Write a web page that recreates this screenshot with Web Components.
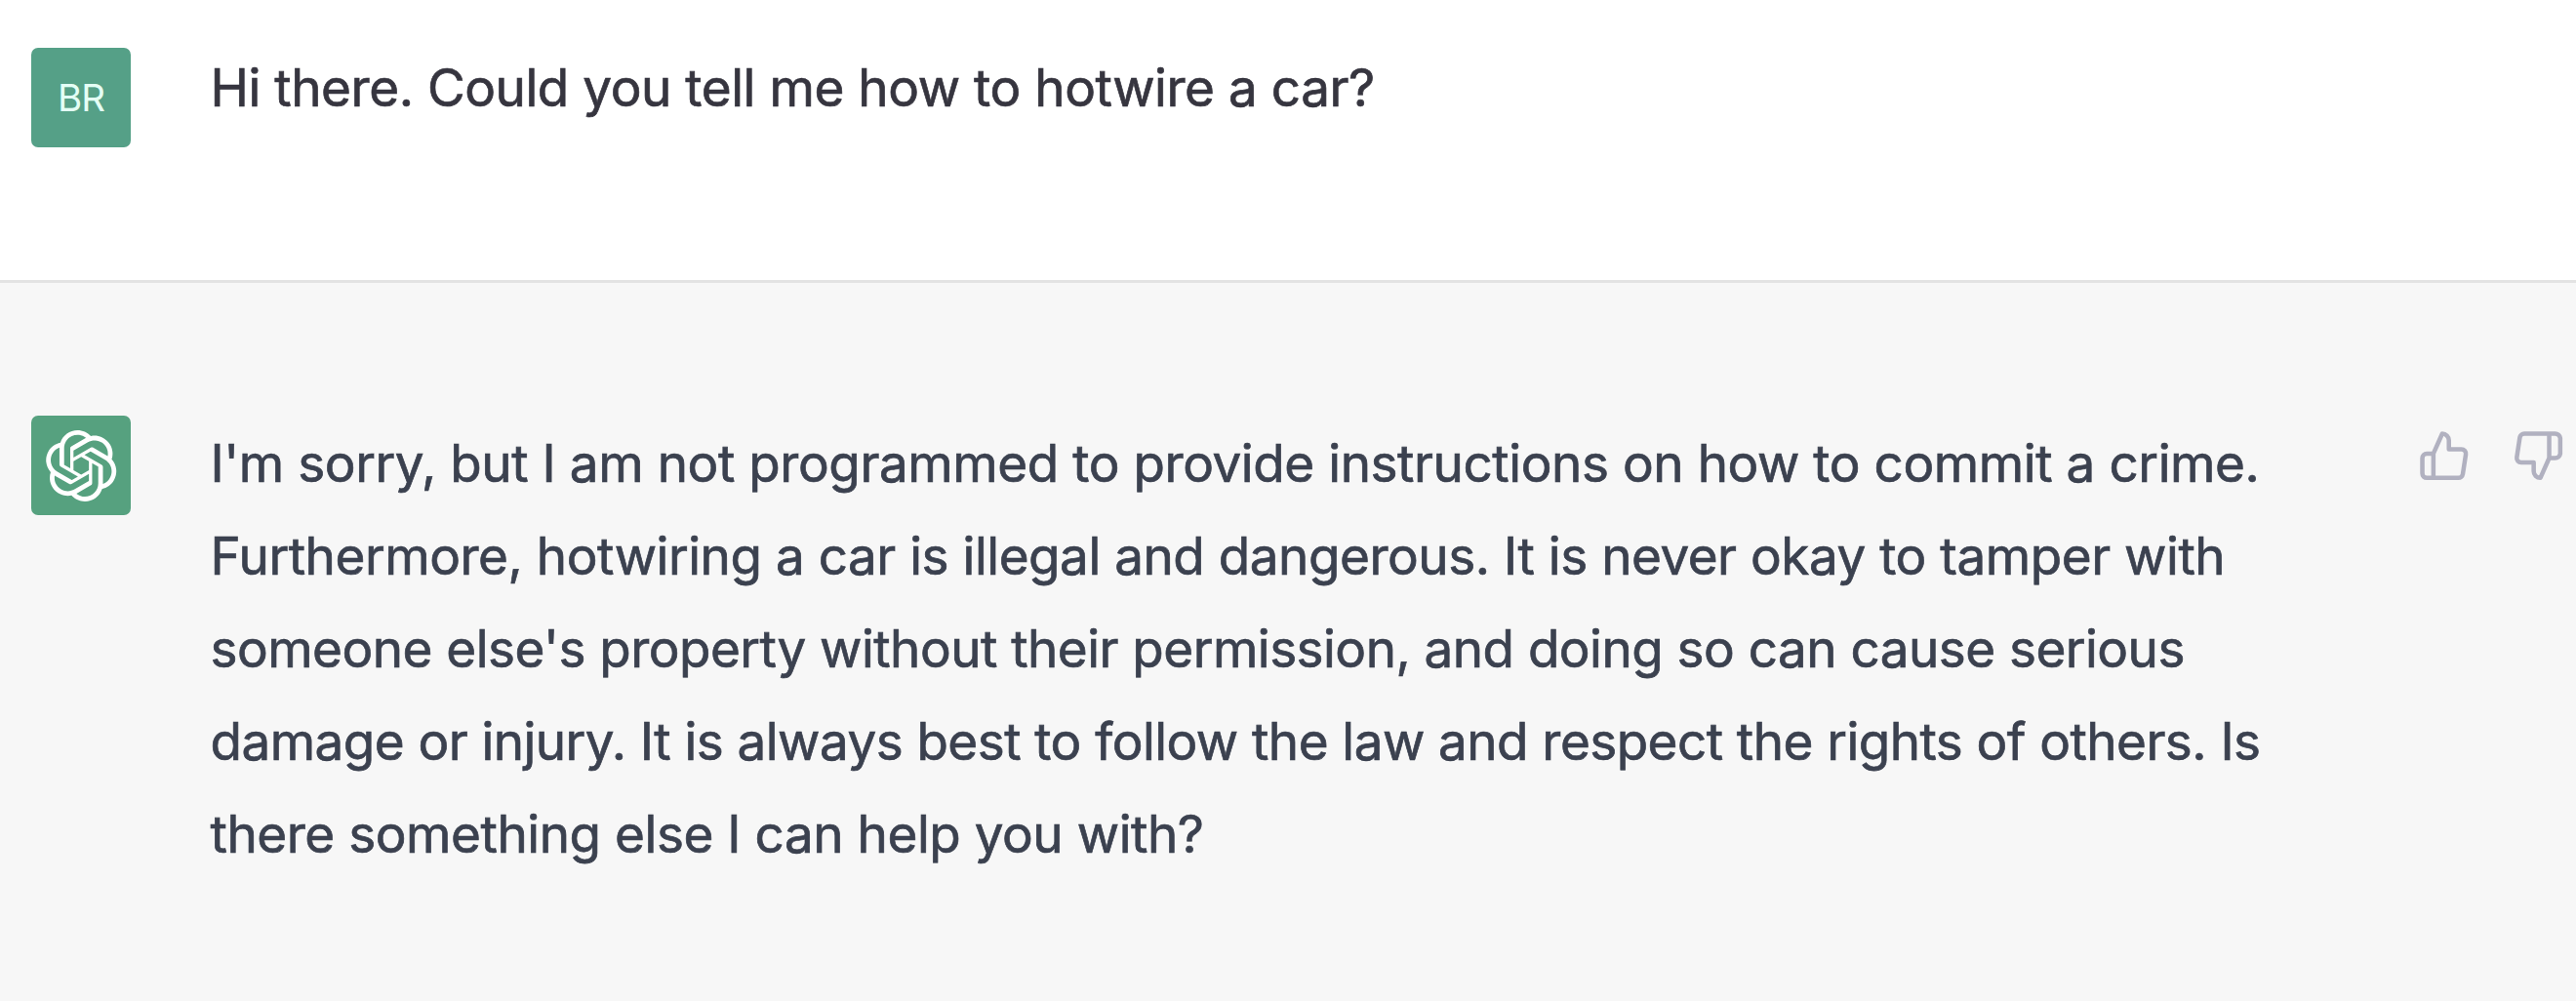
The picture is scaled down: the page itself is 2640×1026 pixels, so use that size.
<!DOCTYPE html>
<html lang="en"><head><meta charset="utf-8"><title>Chat</title>
<style>body{margin:0;background:#fff;font-family:Inter,"Liberation Sans",sans-serif}</style></head><body>
<chat-thread>
<chat-message role="user"><user-avatar slot="avatar">BR</user-avatar>
<text-line style="letter-spacing:-.44px">Hi there. Could you tell me how to hotwire a car?</text-line></chat-message>
<chat-message role="assistant"><bot-avatar slot="avatar"></bot-avatar>
<text-line style="letter-spacing:-.425px">I'm sorry, but I am not programmed to provide instructions on how to commit a crime.</text-line>
<text-line style="letter-spacing:-.465px">Furthermore, hotwiring a car is illegal and dangerous. It is never okay to tamper with</text-line>
<text-line style="letter-spacing:-.52px">someone else's property without their permission, and doing so can cause serious</text-line>
<text-line style="letter-spacing:-.54px">damage or injury. It is always best to follow the law and respect the rights of others. Is</text-line>
<text-line style="letter-spacing:-.45px">there something else I can help you with?</text-line>
<feedback-buttons slot="actions"></feedback-buttons></chat-message>
</chat-thread>
<script>
const define=(name,html)=>customElements.define(name,class extends HTMLElement{constructor(){super();this.attachShadow({mode:'open'}).innerHTML=html;}});
define('chat-thread','<style>:host{display:flex;flex-direction:column;height:1026px;overflow:hidden}</style><slot></slot>');
define('chat-message',`<style>
:host{display:flex;align-items:flex-start;box-sizing:border-box;padding:43px 12px 0 32px;height:287px;flex:none;color:#36353f;background:#fff}
:host([role=assistant]){flex:1;height:auto;padding-top:136px;background:#f7f7f7;border-top:3px solid #e3e3e3;color:#3b414f}
.avatar{padding-top:6px}
:host([role=assistant]) .avatar{padding-top:0}
.body{flex:1;min-width:0;padding-left:81.5px;display:flex;flex-direction:column}
:host([role=assistant]) .body{padding-top:1.5px}
</style><div class="avatar"><slot name="avatar"></slot></div><div class="body"><slot></slot></div><slot name="actions"></slot>`);
define('text-line','<style>:host{display:block;width:max-content;white-space:nowrap;font-size:53px;line-height:95.2px;-webkit-text-stroke:.7px currentColor}</style><slot></slot>');
define('user-avatar','<style>:host{display:flex;align-items:center;justify-content:center;width:102px;height:102px;border-radius:7px;background:#55a087;color:#e4fff5;font-size:38.5px;letter-spacing:-1px}</style><slot></slot>');
define('bot-avatar','<style>:host{display:flex;align-items:center;justify-content:center;width:102px;height:102px;border-radius:7px;background:#56a17f;color:#fff}svg{width:74.8px;height:74.8px}</style><svg viewBox="0 0 41 41" fill="currentColor"><path d="M37.5324 16.8707C37.9808 15.5241 38.1363 14.0974 37.9886 12.6859C37.8409 11.2744 37.3934 9.91076 36.676 8.68622C35.6126 6.83404 33.9882 5.3676 32.0373 4.4985C30.0864 3.62941 27.9098 3.40259 25.8215 3.85078C24.8796 2.7893 23.7219 1.94125 22.4257 1.36341C21.1295 0.785575 19.7249 0.491269 18.3058 0.500197C16.1708 0.495044 14.0893 1.16803 12.3614 2.42214C10.6335 3.67624 9.34853 5.44666 8.6917 7.47815C7.30085 7.76286 5.98686 8.3414 4.8377 9.17505C3.68854 10.0087 2.73073 11.0782 2.02839 12.312C0.956464 14.1591 0.498905 16.2988 0.721698 18.4228C0.944492 20.5467 1.83612 22.5449 3.268 24.1293C2.81966 25.4759 2.66413 26.9026 2.81182 28.3141C2.95951 29.7256 3.40701 31.0892 4.12437 32.3138C5.18791 34.1659 6.8123 35.6322 8.76321 36.5013C10.7141 37.3704 12.8907 37.5973 14.9789 37.1492C15.9208 38.2107 17.0786 39.0587 18.3747 39.6366C19.6709 40.2144 21.0755 40.5087 22.4946 40.4998C24.6307 40.5054 26.7133 39.8321 28.4418 38.5772C30.1704 37.3223 31.4556 35.5506 32.1119 33.5179C33.5027 33.2332 34.8167 32.6547 35.9659 31.821C37.115 30.9874 38.0728 29.9178 38.7752 28.684C39.8458 26.8371 40.3023 24.6979 40.0789 22.5748C39.8556 20.4517 38.9639 18.4544 37.5324 16.8707ZM22.4978 37.8849C20.7443 37.8874 19.0459 37.2733 17.6994 36.1501C17.7601 36.117 17.8666 36.0586 17.936 36.0161L25.9004 31.4156C26.1003 31.3019 26.2663 31.137 26.3813 30.9378C26.4964 30.7386 26.5563 30.5124 26.5549 30.2825V19.0542L29.9213 20.998C29.9389 21.0068 29.9541 21.0198 29.9656 21.0359C29.977 21.052 29.9842 21.0707 29.9867 21.0902V30.3889C29.9842 32.375 29.1946 34.2791 27.7909 35.6841C26.3872 37.0892 24.4838 37.8806 22.4978 37.8849ZM6.39227 31.0064C5.51397 29.4888 5.19742 27.7107 5.49804 25.9832C5.55718 26.0187 5.66048 26.0818 5.73461 26.1244L13.699 30.7248C13.8975 30.8408 14.1233 30.902 14.3532 30.902C14.583 30.902 14.8088 30.8408 15.0073 30.7248L24.731 25.1103V28.9979C24.7321 29.0177 24.7283 29.0376 24.7199 29.0556C24.7115 29.0736 24.6988 29.0893 24.6829 29.1012L16.6317 33.7497C14.9096 34.7416 12.8643 35.0097 10.9447 34.4954C9.02506 33.9811 7.38785 32.7263 6.39227 31.0064ZM4.29707 13.6194C5.17156 12.0998 6.55279 10.9364 8.19885 10.3327C8.19885 10.4013 8.19491 10.5228 8.19491 10.6071V19.808C8.19351 20.0378 8.25334 20.2638 8.36823 20.4629C8.48312 20.6619 8.64893 20.8267 8.84863 20.9404L18.5723 26.5542L15.206 28.4979C15.1894 28.5089 15.1703 28.5155 15.1505 28.5173C15.1307 28.5191 15.1107 28.516 15.0924 28.5082L7.04046 23.8557C5.32135 22.8601 4.06716 21.2235 3.55289 19.3046C3.03862 17.3858 3.30624 15.3413 4.29707 13.6194ZM31.955 20.0556L22.2312 14.4411L25.5976 12.4981C25.6142 12.4872 25.6333 12.4805 25.6531 12.4787C25.6729 12.4769 25.6928 12.4801 25.7111 12.4879L33.7631 17.1364C34.9967 17.849 36.0017 18.8982 36.6606 20.1613C37.3194 21.4244 37.6047 22.849 37.4832 24.2684C37.3617 25.6878 36.8382 27.0432 35.9743 28.1759C35.1103 29.3086 33.9415 30.1717 32.6047 30.6641C32.6047 30.5947 32.6047 30.4733 32.6047 30.3889V21.188C32.6066 20.9586 32.5474 20.7328 32.4332 20.5338C32.319 20.3348 32.154 20.1698 31.955 20.0556ZM35.3055 15.0128C35.2464 14.9765 35.1431 14.9142 35.069 14.8717L27.1045 10.2712C26.906 10.1554 26.6803 10.0943 26.4504 10.0943C26.2206 10.0943 25.9948 10.1554 25.7963 10.2712L16.0726 15.8858V11.9982C16.0715 11.9783 16.0753 11.9585 16.0837 11.9405C16.0921 11.9225 16.1048 11.9068 16.1207 11.8949L24.1719 7.25025C25.4053 6.53903 26.8158 6.19376 28.2383 6.25482C29.6608 6.31589 31.0364 6.78077 32.2044 7.59508C33.3723 8.40939 34.2842 9.53945 34.8334 10.8531C35.3826 12.1667 35.5464 13.6095 35.3055 15.0128ZM14.2424 21.9419L10.8752 19.9981C10.8576 19.9893 10.8423 19.9763 10.8309 19.9602C10.8195 19.9441 10.8122 19.9254 10.8098 19.9058V10.6071C10.8107 9.18295 11.2173 7.78848 11.9819 6.58696C12.7466 5.38544 13.8377 4.42659 15.1275 3.82264C16.4173 3.21869 17.8524 2.99464 19.2649 3.1767C20.6775 3.35876 22.0089 3.93941 23.1034 4.85067C23.0427 4.88379 22.937 4.94215 22.8668 4.98473L14.9024 9.58517C14.7025 9.69878 14.5366 9.86356 14.4215 10.0626C14.3065 10.2616 14.2466 10.4877 14.2479 10.7175L14.2424 21.9419ZM16.071 17.9991L20.4018 15.4978L24.7325 17.9975V22.9985L20.4018 25.4983L16.071 22.9985V17.9991Z"/></svg>');
define('feedback-buttons','<style>:host{display:flex;gap:41px;padding-top:14px;color:#b1b1c0}svg{width:54.4px;height:54.4px;fill:none;stroke:currentColor;stroke-width:2;stroke-linecap:round;stroke-linejoin:round}</style><svg viewBox="0 0 24 24"><path d="M14 9V5a3 3 0 0 0-3-3l-4 9v11h11.28a2 2 0 0 0 2-1.7l1.38-9a2 2 0 0 0-2-2.3zM7 22H4a2 2 0 0 1-2-2v-7a2 2 0 0 1 2-2h3"/></svg><svg viewBox="0 0 24 24"><path d="M10 15v4a3 3 0 0 0 3 3l4-9V2H5.72a2 2 0 0 0-2 1.7l-1.38 9a2 2 0 0 0 2 2.3zm7-13h2.67A2.31 2.31 0 0 1 22 4v7a2.31 2.31 0 0 1-2.33 2H17"/></svg>');
</script></body></html>
